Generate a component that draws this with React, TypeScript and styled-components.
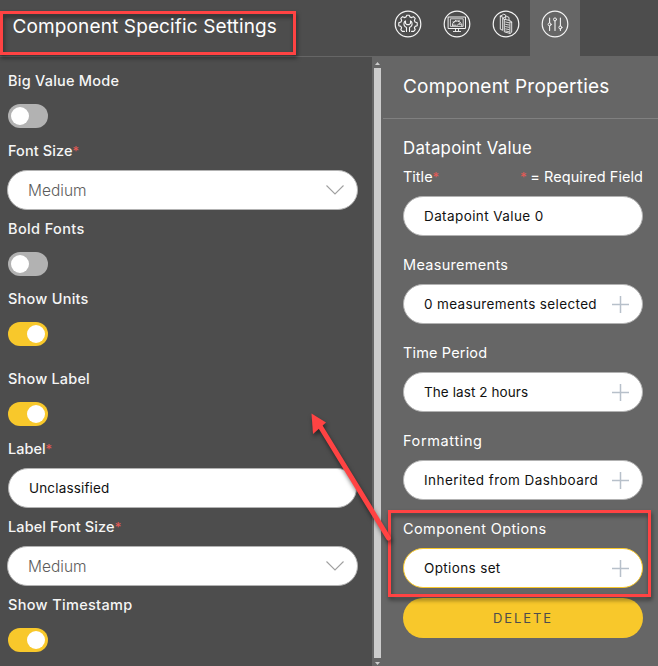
import React from 'react';
import styled, { createGlobalStyle, css } from 'styled-components';

const GlobalStyle = createGlobalStyle`
  * { box-sizing: border-box; }
  body { margin: 0; background: #666; overflow: hidden; }
  #root { font-family: Inter, "Open Sans", sans-serif; color: #fff; }
`;

const Page = styled.div`
  position: relative;
  width: 658px;
  height: 666px;
  display: grid;
  grid-template-rows: 56px 1fr;
  overflow: hidden;
  background: #666;
`;

const Header = styled.header`
  display: grid;
  grid-template-columns: 383px 1fr;
  background: #4d4d4d;
`;

const PanelTitle = styled.h1<{ $ls: number }>`
  margin: 0;
  font-size: 19px;
  font-weight: 400;
  line-height: 24px;
  letter-spacing: ${(p) => p.$ls}px;
  white-space: nowrap;
`;

const HeaderTitle = styled(PanelTitle)`
  padding: 15px 0 0 12.5px;
`;

const Tabs = styled.nav`
  display: flex;
`;

const Tab = styled.button<{ $active?: boolean }>`
  display: flex;
  justify-content: center;
  width: ${(p) => (p.$active ? 50 : 49)}px;
  padding: 10px 0 0 ${(p) => (p.$active ? 0 : 1)}px;
  border: 0;
  color: #f4f4f4;
  background: ${(p) => (p.$active ? '#666' : 'transparent')};
`;

const Body = styled.div`
  display: grid;
  grid-template-columns: 372px 11px 1fr;
  min-height: 0;
`;

const Settings = styled.section`
  border-top: 1px solid #666;
  background: #4d4d4d;
  padding: 14px 14px 0 7px;
`;

const Scrollbar = styled.div`
  display: flex;
  flex-direction: column;
  padding: 6px 2px 1px;
  background: #666;
`;

const ScrollThumb = styled.div`
  flex: 1;
  margin: 3px 0 4px;
  background: #ccc;
`;

const Properties = styled.section`
  display: flex;
  flex-direction: column;
`;

const PropertiesHeading = styled.div`
  height: 63px;
  padding: 19px 0 0 20px;
  border-bottom: 1px solid #808080;
`;

const PropertiesForm = styled.div`
  display: flex;
  flex-direction: column;
  padding: 19px 15px 0 20px;
`;

const Subheading = styled.h2`
  margin: 0 0 9px;
  font-size: 16.8px;
  line-height: 20px;
  font-weight: 400;
  letter-spacing: 0.27px;
`;

const Label = styled.label<{ $ls: number; $strong?: boolean }>`
  display: block;
  height: 20px;
  font-size: 14.5px;
  line-height: 20px;
  font-weight: ${(p) => (p.$strong ? 500 : 400)};
  letter-spacing: ${(p) => p.$ls}px;
  color: ${(p) => (p.$strong ? '#f5f5f5' : '#fff')};
  white-space: nowrap;
`;

const Asterisk = styled.span`
  color: #e85a55;
  font-size: 13px;
  font-weight: 400;
  letter-spacing: -0.5px;
`;

const LabelRow = styled.div`
  display: flex;
  justify-content: space-between;
  margin-bottom: 9px;
`;

const ToggleField = styled.div<{ $gap?: number }>`
  display: flex;
  flex-direction: column;
  gap: 13px;
  padding-left: 1px;
  margin-bottom: ${(p) => p.$gap ?? 13}px;
`;

const ToggleTrack = styled.span<{ $on: boolean }>`
  display: flex;
  justify-content: ${(p) => (p.$on ? 'flex-end' : 'flex-start')};
  width: 40px;
  height: 24px;
  padding: 3px;
  border-radius: 12px;
  background: ${(p) => (p.$on ? '#f8c82b' : '#b2b2b2')};
`;

const ToggleKnob = styled.span`
  width: 18px;
  height: 18px;
  border-radius: 50%;
  background: #fff;
`;

const InputField = styled.div`
  margin-bottom: 9px;
`;

const InputLabel = styled.div`
  padding-left: 1px;
  margin-bottom: 9px;
`;

const pill = css`
  display: flex;
  align-items: center;
  justify-content: space-between;
  height: 40px;
  border: 1px solid #b2b2b2;
  border-radius: 20px;
  background: #fff;
  white-space: nowrap;
`;

const SelectBox = styled.div`
  ${pill}
  padding: 0 12px 0 20px;
  color: #5c5c5c;
  font-size: 15.5px;
  font-weight: 300;
`;

const TextBox = styled.div<{ $ls: number; $selected?: boolean; $inset?: boolean }>`
  ${pill}
  padding: 0 13px 0 20px;
  margin: ${(p) => (p.$inset ? '0 1px' : '0')};
  border-color: ${(p) => (p.$selected ? '#f8c82b' : '#b2b2b2')};
  color: #111;
  font-size: 13.5px;
  letter-spacing: ${(p) => p.$ls}px;
`;

const Property = styled.div`
  display: flex;
  flex-direction: column;
  gap: 9px;
  padding-top: 19px;
`;

const DeleteButton = styled.button`
  height: 40px;
  margin-top: 10px;
  padding: 0;
  border: 0;
  border-radius: 20px;
  background: #f8c82b;
  color: #4d4d4d;
  font-family: inherit;
  font-size: 13px;
  letter-spacing: 1.9px;
`;

const Callout = styled.div<{ $x: number; $y: number; $w: number; $h: number }>`
  position: absolute;
  left: ${(p) => p.$x}px;
  top: ${(p) => p.$y}px;
  width: ${(p) => p.$w}px;
  height: ${(p) => p.$h}px;
  border: 3px solid #ff4343;
  filter: drop-shadow(1px 3px 2px rgba(0, 0, 0, 0.5));
  pointer-events: none;
`;

const CalloutArrow = styled.svg`
  position: absolute;
  left: 300px;
  top: 404px;
  filter: drop-shadow(1px 3px 2px rgba(0, 0, 0, 0.5));
  pointer-events: none;
`;

const RoundIcon = ({ children }: { children: React.ReactNode }) => (
  <svg width="28" height="28" viewBox="0 0 28 28" fill="none" stroke="currentColor" strokeWidth="1" strokeLinejoin="round" strokeLinecap="round">
    <circle cx="14" cy="14" r="12.8" strokeWidth="1.2" />
    {children}
  </svg>
);

const GearIcon = () => (
  <RoundIcon>
    <path d="M10.5 21.3H8.3L6.8 19.7L7.6 17.8L6.9 16.4L4.8 15.7V12.8L6.9 12L7.6 10.4L6.8 8.4L8.6 6.7L10.4 7.6L12.1 6.9L12.8 5.2H15.2L15.9 6.9L17.6 7.6L19.4 6.7L21.2 8.4L20.4 10.4L21.1 12L23.2 12.8V15.7L21.1 16.4L20.4 17.8L21.2 19.7L19.7 21.3H17.5" strokeWidth="1.15" />
    <path d="M12.5 21.5V17.4C10.5 16.5 9.6 14.5 10.1 12.6Q10.4 11.4 11.5 10.9V13.4L12.8 14.6H15.2L16.5 13.4V10.9Q17.6 11.4 17.9 12.6C18.4 14.5 17.5 16.5 15.5 17.4V21.5" strokeWidth="1.1" />
  </RoundIcon>
);

const MonitorIcon = () => (
  <RoundIcon>
    <rect x="5.5" y="7" width="17" height="11.5" />
    <rect x="7.8" y="8.8" width="12.4" height="7.6" strokeWidth=".8" />
    <path d="M9.6 15.5V13.8A4.4 3.8 0 0 1 18 13.2M10 12L11.2 12.6M12.5 10.3L13.1 11.4M16.2 10.3L15.5 11.5M9.6 15.2H13M14 15.5L17 12.8M16.2 14.2H18.8V16M12.5 18.6V21M15.5 18.6V21M10.4 21.5H17.6" strokeWidth=".9" />
  </RoundIcon>
);

const BookletIcon = () => (
  <RoundIcon>
    <path d="M8.3 6.2L11.8 4.2L13.7 5.1V8.5M8.3 6.2V19.2L10.7 20.3V8.3L14.5 6.3L17 7.4V10M8.3 6.2L10.7 7.2M10.7 8.3L12.3 9.3V21.8L18.2 23.5L19.7 22.2V12L17.9 10.5L12.3 9.3M17.9 12V23M19.7 12L17.9 12" strokeWidth=".9" />
    <path d="M13.6 12L16.8 12.7M13.6 14.3L17 15M13.6 16.6L17 17.3M13.6 18.9L17 19.6M13.6 21L17 21.7" strokeWidth=".8" />
  </RoundIcon>
);

const SlidersIcon = () => (
  <RoundIcon>
    <path d="M8.6 8V12.8M8.6 16V20.5M14 11V20.5M19.4 8V16M19.4 18.6V20.5" strokeWidth="1.1" />
    <circle cx="8.6" cy="14.4" r="1.5" />
    <circle cx="14" cy="9.4" r="1.5" />
    <circle cx="19.4" cy="17.4" r="1.5" />
  </RoundIcon>
);

const ChevronIcon = () => (
  <svg width="20" height="20" viewBox="0 0 20 20" fill="none" stroke="#a0a0a0" strokeWidth="1.1">
    <path d="M1.5 5.5L10 14L18.5 5.5" />
  </svg>
);

const PlusIcon = () => (
  <svg width="17" height="17" viewBox="0 0 17 17" fill="none" stroke="#b7c0ca" strokeWidth="1.5">
    <path d="M8.5 0V17M0 8.5H17" />
  </svg>
);

const ScrollArrow = ({ down }: { down?: boolean }) => (
  <svg width="7" height="3" viewBox="0 0 7 3" fill="#ccc">
    <path d={down ? 'M1 0H6L3.5 3Z' : 'M1 3H6L3.5 0Z'} />
  </svg>
);

const Toggle = ({ label, ls, on = false, gap }: { label: string; ls: number; on?: boolean; gap?: number }) => (
  <ToggleField $gap={gap}>
    <Label $strong $ls={ls}>{label}</Label>
    <ToggleTrack $on={on}><ToggleKnob /></ToggleTrack>
  </ToggleField>
);

const RequiredField = ({ label, ls, children }: { label: string; ls: number; children: React.ReactNode }) => (
  <InputField>
    <InputLabel>
      <Label $strong $ls={ls}>{label}<Asterisk>*</Asterisk></Label>
    </InputLabel>
    {children}
  </InputField>
);

const properties = [
  { label: 'Measurements', ls: 0.3, value: '0 measurements selected', valueLs: 0.36 },
  { label: 'Time Period', ls: 0.15, value: 'The last 2 hours', valueLs: 0.08 },
  { label: 'Formatting', ls: 0.63, value: 'Inherited from Dashboard', valueLs: 0.45 },
  { label: 'Component Options', ls: 0.38, value: 'Options set', valueLs: 0.36, selected: true },
];

export default function App() {
  return (
    <Page>
      <GlobalStyle />
      <Header>
        <HeaderTitle $ls={0.13}>Component Specific Settings</HeaderTitle>
        <Tabs>
          <Tab aria-label="Settings"><GearIcon /></Tab>
          <Tab aria-label="Display"><MonitorIcon /></Tab>
          <Tab aria-label="Pages"><BookletIcon /></Tab>
          <Tab aria-label="Properties" $active><SlidersIcon /></Tab>
        </Tabs>
      </Header>
      <Body>
        <Settings>
          <Toggle label="Big Value Mode" ls={0.23} />
          <RequiredField label="Font Size" ls={0.1}>
            <SelectBox>Medium<ChevronIcon /></SelectBox>
          </RequiredField>
          <Toggle label="Bold Fonts" ls={0.38} />
          <Toggle label="Show Units" ls={0.24} on gap={23} />
          <Toggle label="Show Label" ls={0.19} on />
          <RequiredField label="Label" ls={0}>
            <TextBox $ls={0.16} $inset>Unclassified</TextBox>
          </RequiredField>
          <RequiredField label="Label Font Size" ls={0.1}>
            <SelectBox>Medium<ChevronIcon /></SelectBox>
          </RequiredField>
          <Toggle label="Show Timestamp" ls={0.33} on />
        </Settings>
        <Scrollbar>
          <ScrollArrow />
          <ScrollThumb />
          <ScrollArrow down />
        </Scrollbar>
        <Properties>
          <PropertiesHeading>
            <PanelTitle as="h2" $ls={0.2}>Component Properties</PanelTitle>
          </PropertiesHeading>
          <PropertiesForm>
            <Subheading>Datapoint Value</Subheading>
            <LabelRow>
              <Label $ls={0}>Title<Asterisk>*</Asterisk></Label>
              <Label $ls={0.06}><Asterisk>*</Asterisk> = Required Field</Label>
            </LabelRow>
            <TextBox $ls={0.4}>Datapoint Value 0</TextBox>
            {properties.map((p) => (
              <Property key={p.label}>
                <Label $ls={p.ls}>{p.label}</Label>
                <TextBox $ls={p.valueLs} $selected={p.selected}>{p.value}<PlusIcon /></TextBox>
              </Property>
            ))}
            <DeleteButton>DELETE</DeleteButton>
          </PropertiesForm>
        </Properties>
      </Body>
      <Callout $x={0} $y={11} $w={296} $h={44} />
      <Callout $x={388} $y={510} $w={263} $h={87} />
      <CalloutArrow width="100" height="145" viewBox="0 0 100 145">
        <path d="M20 22L88.5 134" stroke="#ff4343" strokeWidth="5" strokeLinecap="round" />
        <path d="M11.5 9.5L26 18.5L13 30Z" fill="#ff4343" />
      </CalloutArrow>
    </Page>
  );
}
